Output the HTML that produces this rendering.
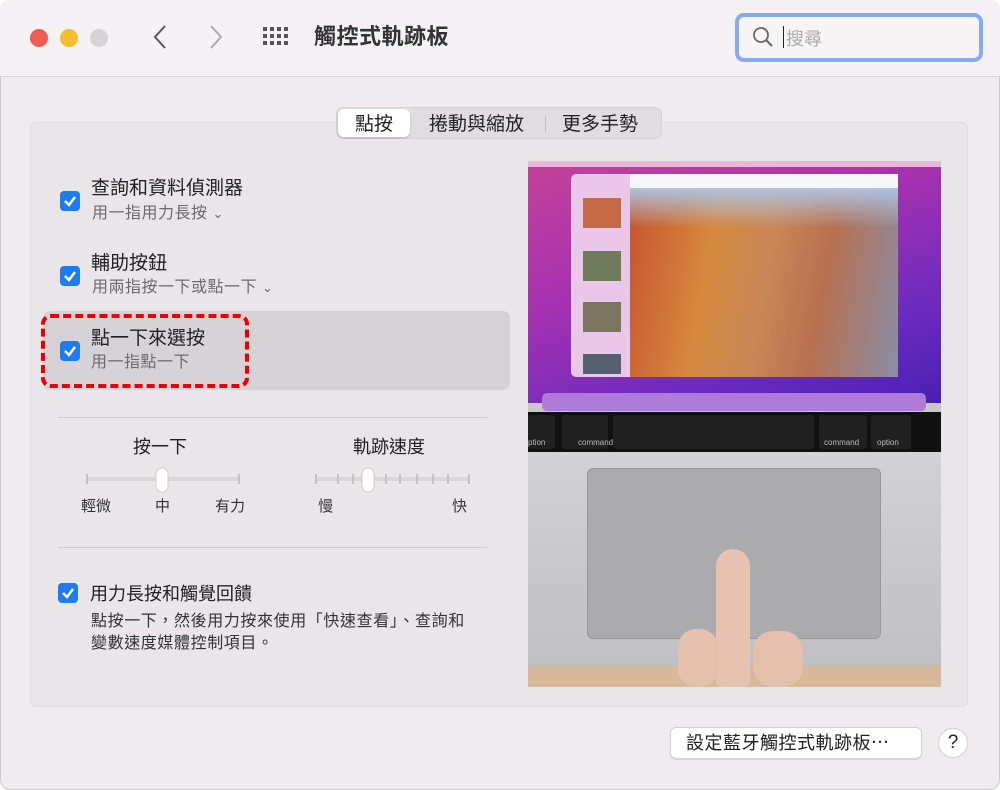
<!DOCTYPE html>
<html><head><meta charset="utf-8"><style>
*{margin:0;padding:0;box-sizing:border-box}
body{width:1000px;height:790px;background:#fff;font-family:"Liberation Sans","Noto Sans CJK TC",sans-serif;position:relative;overflow:hidden;color:#262626}
.win{position:absolute;left:0;top:0;width:1000px;height:790px;background:#efebee;border-radius:10px;box-shadow:inset 0 0 0 1px #cfcbce}
.title{position:absolute;left:0;top:0;width:1000px;height:77px;background:#f5f1f4;border-bottom:1px solid #d6d2d5;border-radius:10px 10px 0 0}
.dot{position:absolute;top:29px;width:18px;height:18px;border-radius:50%}
.abs{position:absolute}
.panel{position:absolute;left:30px;top:122px;width:938px;height:585px;background:#e9e5e8;border:1px solid #e0dce0;border-radius:6px}
.seg{position:absolute;left:336px;top:107px;width:326px;height:32px;background:#e0dce0;border-radius:7px;border:1px solid #d5d1d4}
.cb{position:absolute;width:20px;height:20px;background:#1f7bf0;border-radius:4px}
.cb svg{position:absolute;left:3px;top:3px}
.t1{position:absolute;font-size:19px;color:#222}
.t2{position:absolute;font-size:16px;color:#6d6a6d;letter-spacing:0.5px}
.sm{position:absolute;font-size:15px;color:#333}
</style></head><body>
<div class="win">
<div class="title">
 <div class="dot" style="left:30px;background:#ee5c56"></div>
 <div class="dot" style="left:60px;background:#f6bd2f"></div>
 <div class="dot" style="left:90px;background:#d6d2d6"></div>
 <svg class="abs" style="left:150px;top:24px" width="20" height="26"><path d="M15 2 L5 13 L15 24" fill="none" stroke="#555" stroke-width="2"/></svg>
 <svg class="abs" style="left:206px;top:24px" width="20" height="26"><path d="M5 2 L15 13 L5 24" fill="none" stroke="#aaa" stroke-width="2"/></svg>
 <svg class="abs" style="left:263px;top:27px" width="30" height="20" fill="#555">
  <rect x="0" y="0" width="4" height="4"/><rect x="7" y="0" width="4" height="4"/><rect x="14" y="0" width="4" height="4"/><rect x="21" y="0" width="4" height="4"/>
  <rect x="0" y="7" width="4" height="4"/><rect x="7" y="7" width="4" height="4"/><rect x="14" y="7" width="4" height="4"/><rect x="21" y="7" width="4" height="4"/>
  <rect x="0" y="14" width="4" height="4"/><rect x="7" y="14" width="4" height="4"/><rect x="14" y="14" width="4" height="4"/><rect x="21" y="14" width="4" height="4"/>
 </svg>
 <div class="abs" style="left:314px;top:19px;font-size:22px;font-weight:bold;color:#333;letter-spacing:0.5px">觸控式軌跡板</div>
 <div class="abs" style="left:735px;top:13px;width:248px;height:49px;border:4px solid #86acf0;border-radius:9px;background:#f7f4f6"></div>
 <svg class="abs" style="left:752px;top:26px" width="22" height="22"><circle cx="9" cy="9" r="7" fill="none" stroke="#666" stroke-width="1.8"/><path d="M14 14 L20 20" stroke="#666" stroke-width="2"/></svg>
 <div class="abs" style="left:783px;top:26px;width:1px;height:22px;background:#222"></div>
 <div class="abs" style="left:786px;top:25px;font-size:18px;color:#aaa">搜尋</div>
</div>
<div class="panel"></div>
<div class="seg">
 <div class="abs" style="left:1px;top:1px;width:72px;height:28px;background:#fff;border-radius:6px;box-shadow:0 1px 2px rgba(0,0,0,.2)"></div>
 <div class="abs" style="left:18px;top:1px;font-size:19px;color:#222">點按</div>
 <div class="abs" style="left:92px;top:1px;font-size:19px;color:#222">捲動與縮放</div>
 <div class="abs" style="left:208px;top:8px;width:1px;height:16px;background:#bbb"></div>
 <div class="abs" style="left:225px;top:1px;font-size:19px;color:#222">更多手勢</div>
</div>

<div class="cb" style="left:60px;top:191px"><svg width="14" height="14"><path d="M2 7 L6 11 L12 3" fill="none" stroke="#fff" stroke-width="2.5"/></svg></div>
<div class="t1" style="left:91px;top:173px">查詢和資料偵測器</div>
<div class="t2" style="left:92px;top:199px">用一指用力長按 <span style="font-size:13px">⌄</span></div>
<div class="cb" style="left:60px;top:266px"><svg width="14" height="14"><path d="M2 7 L6 11 L12 3" fill="none" stroke="#fff" stroke-width="2.5"/></svg></div>
<div class="t1" style="left:91px;top:248px">輔助按鈕</div>
<div class="t2" style="left:92px;top:273px">用兩指按一下或點一下 <span style="font-size:13px">⌄</span></div>

<div class="abs" style="left:43px;top:311px;width:467px;height:79px;background:#d6d2d5;border-radius:7px"></div>
<div class="abs" style="left:41px;top:314px;width:208px;height:74px;border:4px dashed #ee0000;border-radius:10px"></div>
<div class="cb" style="left:60px;top:341px"><svg width="14" height="14"><path d="M2 7 L6 11 L12 3" fill="none" stroke="#fff" stroke-width="2.5"/></svg></div>
<div class="t1" style="left:91px;top:323px">點一下來選按</div>
<div class="t2" style="left:91px;top:348px">用一指點一下</div>

<div class="abs" style="left:58px;top:417px;width:429px;height:1px;background:#cfcbce"></div>
<div class="t1" style="left:133px;top:433px;font-size:18px">按一下</div>
<div class="t1" style="left:353px;top:433px;font-size:18px">軌跡速度</div>
<svg class="abs" style="left:80px;top:465px" width="400" height="30">
 <rect x="6" y="12" width="153" height="4" rx="2" fill="#d8d4d7"/>
 <g stroke="#c4c0c3" stroke-width="2"><path d="M7 9v10M159 9v10"/></g>
 <rect x="236" y="12" width="153" height="4" rx="2" fill="#d8d4d7"/>
 <g stroke="#c4c0c3" stroke-width="2"><path d="M236 9v10M258 9v10M273 9v10M306 9v10M320 9v10M337 9v10M353 9v10M368 9v10M389 9v10"/></g>
 <rect x="76" y="3" width="12" height="24" rx="6" fill="#fff" stroke="#d0ccd0"/>
 <rect x="282" y="3" width="12" height="24" rx="6" fill="#fff" stroke="#d0ccd0"/>
</svg>
<div class="sm" style="left:81px;top:495px">輕微</div>
<div class="sm" style="left:155px;top:495px">中</div>
<div class="sm" style="left:215px;top:495px">有力</div>
<div class="sm" style="left:318px;top:495px">慢</div>
<div class="sm" style="left:452px;top:495px">快</div>
<div class="abs" style="left:58px;top:547px;width:429px;height:1px;background:#cfcbce"></div>

<div class="cb" style="left:58px;top:583px"><svg width="14" height="14"><path d="M2 7 L6 11 L12 3" fill="none" stroke="#fff" stroke-width="2.5"/></svg></div>
<div class="t1" style="left:90px;top:580px;font-size:18px">用力長按和觸覺回饋</div>
<div class="abs" style="left:91px;top:611px;line-height:22px;color:#333;font-size:16px;letter-spacing:0.6px">點按一下，然後用力按來使用「快速查看」、查詢和<br>變數速度媒體控制項目。</div>

<!-- image -->
<div class="abs" style="left:528px;top:161px;width:413px;height:526px;overflow:hidden;background:#c8c8c9">
 <div class="abs" style="left:0;top:0;width:413px;height:242px;background:linear-gradient(160deg,#c5429a 0%,#a531b0 40%,#6a2ac0 75%,#4a20b0 100%)"></div>
 <div class="abs" style="left:0;top:0;width:413px;height:6px;background:#e8b7d8"></div>
 <div class="abs" style="left:43px;top:13px;width:59px;height:203px;background:#eac7e9;border-radius:5px 0 0 5px"></div>
 <div class="abs" style="left:55px;top:37px;width:38px;height:30px;background:#c46a45"></div>
 <div class="abs" style="left:55px;top:90px;width:38px;height:30px;background:#6f7a5a"></div>
 <div class="abs" style="left:55px;top:141px;width:38px;height:30px;background:#7b7560"></div>
 <div class="abs" style="left:55px;top:193px;width:38px;height:20px;background:#566070"></div>
 <div class="abs" style="left:102px;top:13px;width:268px;height:14px;background:#f6f6f6"></div>
 <div class="abs" style="left:102px;top:27px;width:268px;height:189px;background:linear-gradient(100deg,#c7532f 0%,#d6883e 30%,#c98756 50%,#b87050 70%,#8a8ea8 100%)"></div>
 <div class="abs" style="left:102px;top:27px;width:268px;height:40px;background:linear-gradient(180deg,#aec3de,rgba(174,195,222,0))"></div>
 <div class="abs" style="left:14px;top:232px;width:384px;height:18px;background:#b07ad8;border-radius:5px"></div>
 <div class="abs" style="left:0;top:251px;width:413px;height:40px;background:#111"></div>
 <div class="abs" style="left:34px;top:254px;width:46px;height:34px;background:#202020;border-radius:3px"></div>
 <div class="abs" style="left:85px;top:254px;width:201px;height:34px;background:#202020;border-radius:3px"></div>
 <div class="abs" style="left:291px;top:254px;width:48px;height:34px;background:#202020;border-radius:3px"></div>
 <div class="abs" style="left:343px;top:254px;width:40px;height:34px;background:#202020;border-radius:3px"></div>
 <div class="abs" style="left:0;top:254px;width:27px;height:34px;background:#202020;border-radius:3px"></div>
 <div class="abs" style="left:50px;top:277px;font-size:8px;color:#bbb">command</div>
 <div class="abs" style="left:296px;top:277px;font-size:8px;color:#bbb">command</div>
 <div class="abs" style="left:349px;top:277px;font-size:8px;color:#bbb">option</div>
 <div class="abs" style="left:0;top:277px;font-size:8px;color:#bbb">ption</div>
 <div class="abs" style="left:0;top:291px;width:413px;height:214px;background:linear-gradient(180deg,#d2d2d4,#c0c0c2)"></div>
 <div class="abs" style="left:59px;top:307px;width:294px;height:171px;background:#ababae;border:1px solid #98989b;border-radius:6px"></div>
 <div class="abs" style="left:0;top:505px;width:413px;height:21px;background:#d7b89a"></div>
 <div class="abs" style="left:188px;top:388px;width:34px;height:138px;background:#e7c2b0;border-radius:17px 17px 6px 6px"></div>
 <div class="abs" style="left:150px;top:468px;width:40px;height:58px;background:#e5c0ad;border-radius:18px"></div>
 <div class="abs" style="left:225px;top:470px;width:50px;height:56px;background:#e5c0ad;border-radius:20px"></div>
</div>

<div class="abs" style="left:670px;top:727px;width:252px;height:32px;background:#fff;border:1px solid #d3cfd2;border-radius:6px;box-shadow:0 1px 1px rgba(0,0,0,.1)"></div>
<div class="abs" style="left:686px;top:729px;font-size:18px;color:#222;letter-spacing:0.5px">設定藍牙觸控式軌跡板⋯</div>
<div class="abs" style="left:938px;top:728px;width:30px;height:30px;border-radius:50%;background:#fff;border:1px solid #d3cfd2;text-align:center;font-size:19px;line-height:28px;color:#222">?</div>
</div>
</body></html>
